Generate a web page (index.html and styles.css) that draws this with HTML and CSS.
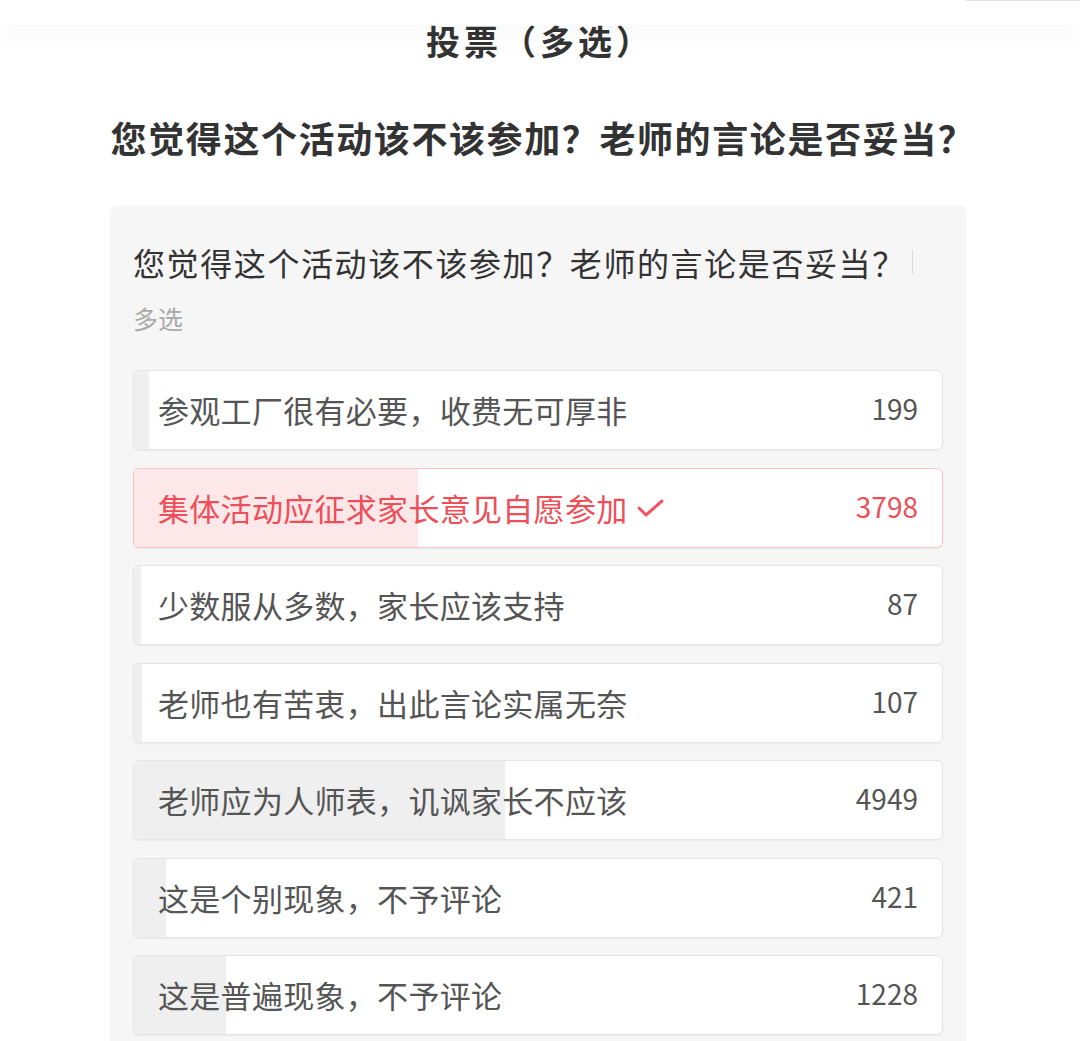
FILE: index.html
```html
<!DOCTYPE html>
<html lang="zh-CN">
<head>
  <meta charset="UTF-8">
  <title>投票（多选）</title>
  <link rel="stylesheet" href="styles.css">
</head>
<body>
  <div class="topbar">
    <div class="topbar-edge"></div>
  </div>

  <div class="page">
    <h2 class="vote-title">投票（多选）</h2>
    <h1 class="vote-heading">您觉得这个活动该不该参加？老师的言论是否妥当？</h1>

    <div class="vote-card">
      <div class="vote-question">
        <span>您觉得这个活动该不该参加？老师的言论是否妥当？</span>
        <span class="caret"></span>
      </div>
      <div class="vote-type">多选</div>

      <div class="options">
        <div class="option">
          <div class="option-bar" style="width: 1.84%"></div>
          <span class="option-text">参观工厂很有必要，收费无可厚非</span>
          <span class="option-count">199</span>
        </div>
        <div class="option option-selected">
          <div class="option-bar" style="width: 35.20%"></div>
          <span class="option-text">集体活动应征求家长意见自愿参加
            <svg class="check" width="30" height="22" viewBox="0 0 30 22">
              <polyline points="3,11 10,18 26,4" fill="none" stroke="#ef5560" stroke-width="3" stroke-linecap="round" stroke-linejoin="round"/>
            </svg>
          </span>
          <span class="option-count">3798</span>
        </div>
        <div class="option">
          <div class="option-bar" style="width: 0.81%"></div>
          <span class="option-text">少数服从多数，家长应该支持</span>
          <span class="option-count">87</span>
        </div>
        <div class="option">
          <div class="option-bar" style="width: 0.99%"></div>
          <span class="option-text">老师也有苦衷，出此言论实属无奈</span>
          <span class="option-count">107</span>
        </div>
        <div class="option">
          <div class="option-bar" style="width: 45.87%"></div>
          <span class="option-text">老师应为人师表，讥讽家长不应该</span>
          <span class="option-count">4949</span>
        </div>
        <div class="option">
          <div class="option-bar" style="width: 3.90%"></div>
          <span class="option-text">这是个别现象，不予评论</span>
          <span class="option-count">421</span>
        </div>
        <div class="option">
          <div class="option-bar" style="width: 11.38%"></div>
          <span class="option-text">这是普遍现象，不予评论</span>
          <span class="option-count">1228</span>
        </div>
      </div>
    </div>
  </div>
</body>
</html>
```

FILE: styles.css
```css
body {
  margin: 0;
  background: #fff;
  font-family: "Noto Sans CJK SC", "Noto Sans", sans-serif;
  color: #333;
  overflow: hidden;
}
.topbar {
  height: 25px;
  background: #fff;
  display: flex;
  box-shadow: 0 6px 30px rgba(0, 0, 0, 0.04);
  position: relative;
  z-index: 1;
}
.topbar-edge {
  margin-left: auto;
  width: 115px;
  height: 1px;
  background: #e2e2e2;
}
.page {
  width: 860px;
  margin: 0 auto;
}
.vote-title {
  margin: -2px 0 0;
  font-size: 34px;
  line-height: 36px;
  letter-spacing: 4px;
  font-weight: bold;
  text-align: center;
  color: #333;
}
.vote-heading {
  margin: 56px -33px 0 -27px;
  font-size: 36px;
  line-height: 44px;
  letter-spacing: 1.6px;
  font-weight: bold;
  text-align: center;
  white-space: nowrap;
  color: #333;
}
.vote-card {
  margin-top: 47px;
  width: 857px;
  box-sizing: border-box;
  padding: 36px 24px 40px 23px;
  background: #f6f6f6;
  border-radius: 6px;
}
.vote-question {
  display: flex;
  align-items: center;
  font-size: 32px;
  line-height: 40px;
  letter-spacing: 1.6px;
  color: #333;
}
.caret {
  width: 1px;
  height: 24px;
  margin-left: 6px;
  background: #d8d8d8;
}
.vote-type {
  margin-top: 21px;
  font-size: 25px;
  line-height: 30px;
  color: #aaa;
}
.options {
  margin-top: 37px;
}
.option {
  position: relative;
  display: flex;
  align-items: center;
  justify-content: space-between;
  height: 80px;
  box-sizing: border-box;
  margin-bottom: 17.5px;
  padding: 0 24px;
  background: #fff;
  border: 1px solid #e4e4e4;
  border-radius: 6px;
  box-shadow: 0 1px 2px rgba(0, 0, 0, 0.05);
  overflow: hidden;
}
.option-bar {
  position: absolute;
  left: 0;
  top: 0;
  bottom: 0;
  background: #efefef;
}
.option-text {
  position: relative;
  display: flex;
  align-items: center;
  font-size: 31px;
  line-height: 40px;
  letter-spacing: 0.3px;
  color: #555;
}
.option-count {
  position: relative;
  font-size: 28px;
  line-height: 40px;
  margin-top: -4px;
  color: #555;
}
.check {
  margin-left: 8px;
}
.option-selected {
  border-color: #f8c3c7;
}
.option-selected .option-bar {
  background: #fde8e9;
}
.option-selected .option-text,
.option-selected .option-count {
  color: #ee4e58;
}
```
